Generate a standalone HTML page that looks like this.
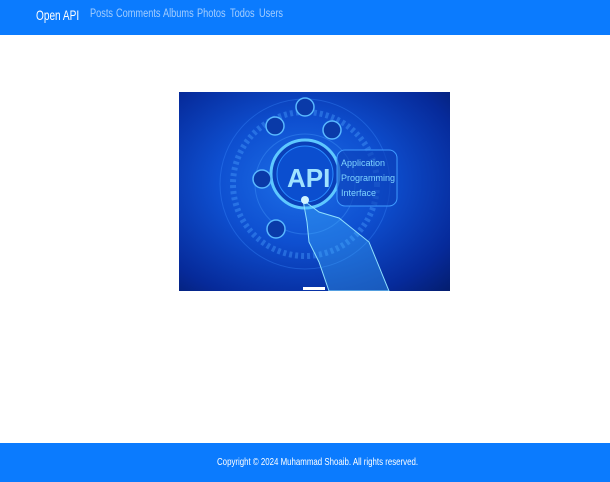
<!DOCTYPE html>
<html><head><meta charset="utf-8"><style>
*{margin:0;padding:0;box-sizing:border-box}
body{width:610px;height:482px;background:#fff;font-family:"Liberation Sans",sans-serif;position:relative;overflow:hidden}
nav{position:absolute;left:0;top:0;width:610px;height:35px;background:#0b7bfe}
.brand{position:absolute;left:36px;top:7px;color:#fff;font-size:14px;transform:scaleX(.72);transform-origin:left;white-space:nowrap}
.l{position:absolute;top:8px;font-size:11.5px;color:rgba(255,255,255,.62);transform:scaleX(.8);transform-origin:left;white-space:nowrap}
.img{position:absolute;left:179px;top:92px;width:271px;height:199px;background:radial-gradient(ellipse at 45% 45%,#1d6fe8 0%,#0e4fd0 40%,#062a9a 80%,#041d6e 100%);overflow:hidden}
footer{position:absolute;left:0;top:443px;width:610px;height:39px;background:#0b7bfe}
footer span{position:absolute;left:217px;top:13px;color:#fff;font-size:10.5px;white-space:nowrap;transform:scaleX(.75);transform-origin:left}
</style></head><body>
<nav><div class="brand">Open API</div>
<span class="l" style="left:90px">Posts</span><span class="l" style="left:116px">Comments</span><span class="l" style="left:163px">Albums</span><span class="l" style="left:197px">Photos</span><span class="l" style="left:230px">Todos</span><span class="l" style="left:259px">Users</span></nav>
<div class="img">
<svg width="271" height="199" viewBox="0 0 271 199">
<circle cx="126" cy="92" r="85" fill="none" stroke="#3c8cff" stroke-opacity=".35" stroke-width="1"/>
<circle cx="126" cy="92" r="72" fill="none" stroke="#4aa0ff" stroke-opacity=".4" stroke-width="6" stroke-dasharray="3 3"/>
<circle cx="126" cy="92" r="50" fill="none" stroke="#4aa0ff" stroke-opacity=".35" stroke-width="1"/>
<circle cx="126" cy="82" r="34" fill="#0a3fb8" stroke="#5ec8ff" stroke-width="3"/>
<circle cx="126" cy="82" r="28" fill="#0b4ecf" stroke="#2a8cff" stroke-width="1"/>
<text x="108" y="95" font-family="Liberation Sans" font-weight="bold" font-size="26" fill="#9fe2ff">API</text>
<g fill="#0a3aa8" stroke="#59b8ff" stroke-width="1.5">
<circle cx="126" cy="15" r="9"/><circle cx="153" cy="38" r="9"/><circle cx="96" cy="34" r="9"/><circle cx="83" cy="87" r="9"/><circle cx="97" cy="137" r="9"/></g>
<rect x="158" y="58" width="60" height="56" rx="8" fill="#0b3fb8" fill-opacity=".6" stroke="#3e9aff" stroke-width="1"/>
<text x="162" y="74" font-family="Liberation Sans" font-size="9" fill="#7fd4ff">Application</text>
<text x="162" y="89" font-family="Liberation Sans" font-size="9" fill="#7fd4ff">Programming</text>
<text x="162" y="104" font-family="Liberation Sans" font-size="9" fill="#7fd4ff">Interface</text>
<path d="M124 108 L140 120 L160 126 L190 150 L210 199 L150 199 L140 170 L130 150 L128 130 Z" fill="#3fb4ff" fill-opacity=".35" stroke="#8ee0ff" stroke-width="1"/>
<circle cx="126" cy="108" r="4" fill="#cff4ff"/>
<rect x="124" y="195" width="22" height="3" fill="#fff"/>
</svg>
</div>
<footer><span>Copyright © 2024 Muhammad Shoaib. All rights reserved.</span></footer>
</body></html>
